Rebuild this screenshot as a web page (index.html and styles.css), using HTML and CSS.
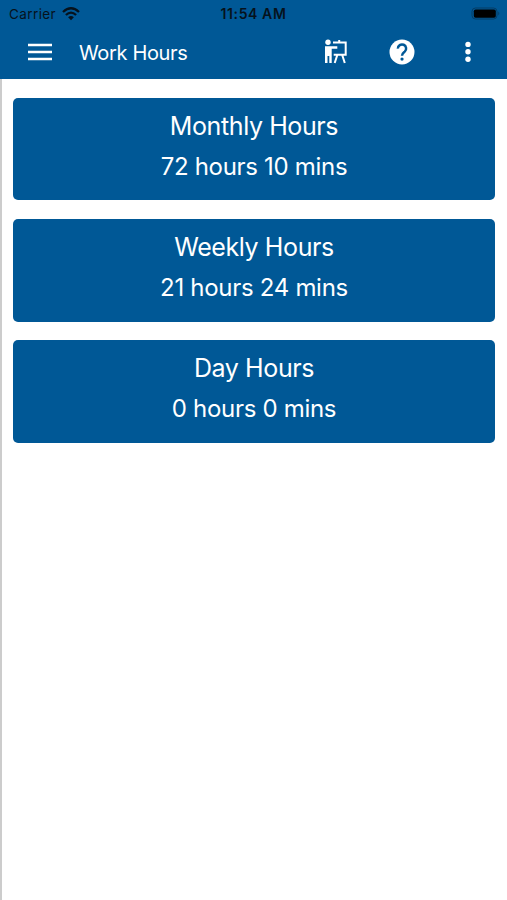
FILE: index.html
```html
<!DOCTYPE html>
<html lang="en">
<head>
  <meta charset="utf-8">
  <title>Work Hours</title>
  <link rel="stylesheet" href="styles.css">
</head>
<body>
  <header class="header">
    <div class="status-bar">
      <div class="status-left">
        <span class="carrier">Carrier</span>
        <svg class="wifi" width="18" height="14" viewBox="0 0 18 14">
          <path d="M1 5 Q9 -2.4 17 5" />
          <path d="M3.9 8 Q9 3.2 14.1 8" />
          <path class="dot" d="M6.1 10.3 Q9 7.7 11.9 10.3 L9 13.3 Z" />
        </svg>
      </div>
      <span class="time">11:54 AM</span>
      <div class="status-right">
        <svg width="30" height="13" viewBox="0 0 30 13">
          <rect class="battery-case" x="1" y="1" width="25" height="11" rx="3.5" />
          <rect x="2.8" y="2.4" width="22" height="8.4" rx="1.8" />
          <path class="battery-tip" d="M27.3 4.6 Q29.3 6.5 27.3 8.4 Z" />
        </svg>
      </div>
    </div>
    <nav class="toolbar">
      <svg class="menu" width="24" height="18" viewBox="0 0 24 18">
        <path d="M0 1.9h24M0 9h24M0 16.1h24" />
      </svg>
      <h1>Work Hours</h1>
      <svg class="teach" width="24" height="26" viewBox="0 0 24 26">
        <circle cx="4" cy="3.3" r="2.7" />
        <path d="M1 7.3h12.3v2.5H7.7V24H5.3v-7H3.5v7H1z" />
        <path class="line" d="M9 3.6h12.7v12.1H9.7M15.2 1v2.6M13.3 16l-2.6 8M18.2 16l2.6 8" />
      </svg>
      <svg class="help" width="30" height="30" viewBox="0 0 24 24">
        <circle cx="12" cy="12" r="10" />
        <path class="hook" d="M8.7 9.3a3.3 3.3 0 1 1 5.5 2.4C13 12.7 12 13.1 12 14.9" />
        <circle class="point" cx="12" cy="17.6" r="1.3" />
      </svg>
      <svg class="more" width="6" height="22" viewBox="0 0 6 22">
        <circle cx="3" cy="3.4" r="2.7" />
        <circle cx="3" cy="10.8" r="2.7" />
        <circle cx="3" cy="18.2" r="2.7" />
      </svg>
    </nav>
  </header>

  <main class="content">
    <section class="card">
      <h2>Monthly Hours</h2>
      <p>72 hours 10 mins</p>
    </section>
    <section class="card">
      <h2>Weekly Hours</h2>
      <p>21 hours 24 mins</p>
    </section>
    <section class="card">
      <h2>Day Hours</h2>
      <p>0 hours 0 mins</p>
    </section>
  </main>
</body>
</html>
```
FILE: styles.css
```css
* {
  box-sizing: border-box;
}
body {
  margin: 0;
  height: 900px;
  display: flex;
  flex-direction: column;
  background: #fff;
  font-family: Inter, "Liberation Sans", sans-serif;
  color: #fff;
}
svg {
  display: block;
  flex: none;
}
h1, h2, p {
  margin: 0;
  font-weight: 400;
  white-space: nowrap;
}

/* header */
.header {
  height: 79px;
  background: #005896;
}
.status-bar {
  display: grid;
  grid-template-columns: 1fr auto 1fr;
  align-items: center;
  height: 27px;
  padding: 0 6px 0 9px;
  color: #06121c;
  font-size: 13.5px;
}
.status-left {
  display: flex;
  align-items: center;
  gap: 6px;
}
.carrier {
  letter-spacing: 0.4px;
}
.time {
  margin-right: 3px;
  font-size: 14px;
  font-weight: 600;
  letter-spacing: 0.6px;
}
.status-right {
  display: flex;
  justify-content: flex-end;
}
.wifi path {
  fill: none;
  stroke: #06121c;
  stroke-width: 2.3;
}
.wifi .dot {
  fill: #06121c;
  stroke: none;
}
.battery-case {
  fill: none;
  stroke: #053c65;
}
.battery-tip {
  fill: #053c65;
}
.toolbar {
  display: flex;
  align-items: center;
  height: 50px;
  padding: 0 36px 0 28px;
}
.toolbar h1 {
  flex: 1;
  margin-left: 27px;
  padding-top: 1px;
  font-size: 20px;
  letter-spacing: -0.35px;
}
.toolbar svg {
  fill: #fff;
}
.menu path {
  stroke: #fff;
  stroke-width: 2.5;
}
.teach .line {
  fill: none;
  stroke: #fff;
  stroke-width: 2;
}
.help {
  margin-left: 39px;
}
.help .hook {
  fill: none;
  stroke: #005896;
  stroke-width: 2;
}
.help .point {
  fill: #005896;
}
.more {
  margin-left: 48px;
}

/* cards */
.content {
  flex: 1;
  display: flex;
  flex-direction: column;
  gap: 18.5px;
  padding: 18.5px 12px 0 11px;
  border-left: 2px solid #ccc;
}
.card {
  height: 102.8px;
  padding-top: 8px;
  border-radius: 5px;
  background: #005896;
  text-align: center;
}
.card h2, .card p {
  font-size: 25px;
  line-height: 40.4px;
  letter-spacing: -0.4px;
}
.card p {
  padding-top: 0.6px;
  font-size: 24px;
  letter-spacing: -0.3px;
}
```
